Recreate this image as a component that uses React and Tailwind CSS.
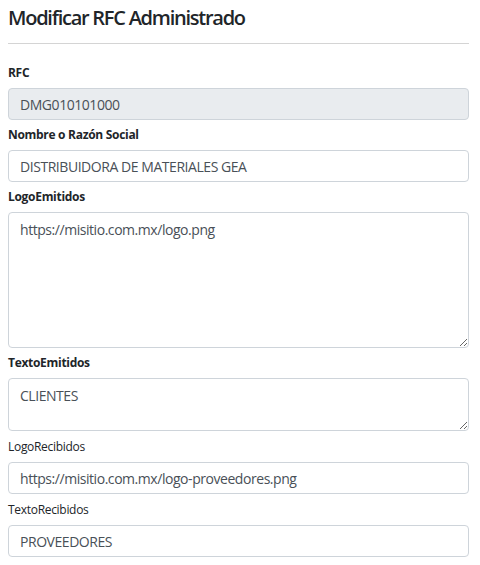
export default function App() {
  const label = 'block h-[18px] leading-[18px] text-[12px] text-[#212529] my-[6px] tracking-[-0.3px]'
  const input = 'block w-full h-[32px] px-[11px] text-[14px] tracking-[-0.45px] text-[#495057] border border-[#ced4da] rounded-[4px] outline-none'
  return (
    <div className="min-h-screen bg-white px-2 [font-family:'Open_Sans',sans-serif]">
      <div className="w-[461px]">
        <h1 className="pt-[5px] h-[43px] text-[20px] leading-[25px] font-semibold tracking-[-1.25px] text-[#212529]">Modificar RFC Administrado</h1>
        <hr className="border-0 h-px bg-[#d4d4d4] mb-[20px]" />
        <label className={`${label} font-bold`}>RFC</label>
        <input className={`${input} bg-[#e9ecef]`} defaultValue="DMG010101000" readOnly />
        <label className={`${label} font-bold`}>Nombre o Razón Social</label>
        <input className={`${input} bg-white`} defaultValue="DISTRIBUIDORA DE MATERIALES GEA" />
        <label className={`${label} font-bold`}>LogoEmitidos</label>
        <textarea className={`${input} bg-white h-[136px] py-[6px] leading-[21px]`} defaultValue="https://misitio.com.mx/logo.png" />
        <label className={`${label} font-bold`}>TextoEmitidos</label>
        <textarea className={`${input} bg-white h-[53px] py-[6px] leading-[21px]`} defaultValue="CLIENTES" />
        <label className={`${label} mt-[7px]`}>LogoRecibidos</label>
        <input className={`${input} bg-white`} defaultValue="https://misitio.com.mx/logo-proveedores.png" />
        <label className={`${label} mt-[7px]`}>TextoRecibidos</label>
        <input className={`${input} bg-white`} defaultValue="PROVEEDORES" />
      </div>
    </div>
  )
}
